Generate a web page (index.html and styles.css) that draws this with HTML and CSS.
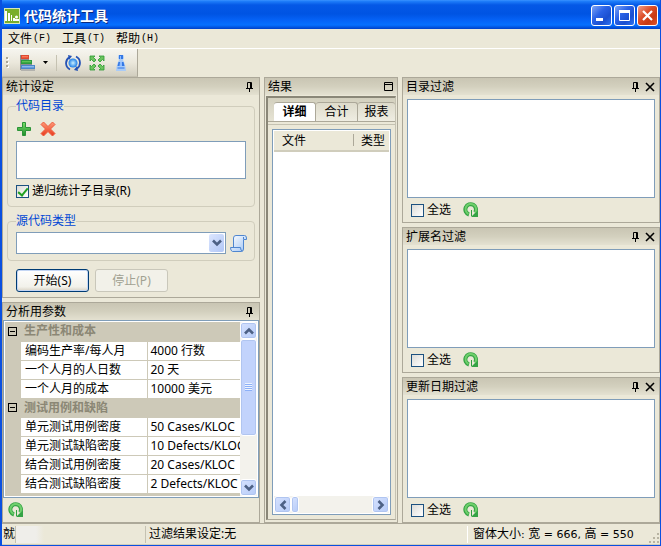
FILE: index.html
```html
<!DOCTYPE html>
<html lang="zh-CN">
<head>
<meta charset="utf-8">
<title>代码统计工具</title>
<link rel="stylesheet" href="styles.css">
</head>
<body>
<svg class="defs" aria-hidden="true">
  <defs>
    <linearGradient id="g-green" x1="0" y1="0" x2="0" y2="1"><stop offset="0" stop-color="#7be06a"/><stop offset="1" stop-color="#1f8d2b"/></linearGradient>
    <linearGradient id="g-red" x1="0" y1="0" x2="0" y2="1"><stop offset="0" stop-color="#ff9a78"/><stop offset="1" stop-color="#e8391c"/></linearGradient>
    <linearGradient id="g-blue" x1="0" y1="0" x2="0" y2="1"><stop offset="0" stop-color="#b5d6fb"/><stop offset="1" stop-color="#3e7fd0"/></linearGradient>
    <linearGradient id="g-paper" x1="0" y1="0" x2="1" y2="1"><stop offset="0" stop-color="#ffffff"/><stop offset="1" stop-color="#9fc4f4"/></linearGradient>
    <linearGradient id="g-pawn" x1="0" y1="0" x2="1" y2="0"><stop offset="0" stop-color="#2f74e0"/><stop offset=".5" stop-color="#9cc8ff"/><stop offset="1" stop-color="#2f74e0"/></linearGradient>
    <radialGradient id="g-globe"><stop offset="0" stop-color="#c9f0ff"/><stop offset="1" stop-color="#1d7ee8"/></radialGradient>
  </defs>
  <symbol id="pin" viewBox="0 0 7 10"><path d="M1.5 6V.5h4V6M4.5 1v5M0 6.5h7M3.5 7v3" fill="none" stroke="#000"/></symbol>
  <symbol id="close" viewBox="0 0 10 10"><path d="M1 1l8 8M9 1L1 9" fill="none" stroke="#000" stroke-width="1.6"/></symbol>
  <symbol id="refresh" viewBox="0 0 16 16"><path d="M6 12.500A5.300 5.300 0 1 1 12 10.500" fill="none" stroke="#35a345" stroke-width="4"/><path d="M15 8v7H8z" fill="#35a345"/><path d="M5.500 12A5.300 5.300 0 1 1 12 10.500" fill="none" stroke="#6fcf6c" stroke-width="2"/><path d="M8.500 8v6" stroke="#2f9f3d"/></symbol>
  <symbol id="chev" viewBox="0 0 10 8"><path d="M1 1.500l4 4 4-4" fill="none" stroke="#4d6185" stroke-width="2.600"/></symbol>
</svg>
<div class="window">
  <header class="titlebar">
    <svg class="logo" viewBox="0 0 16 16"><rect width="16" height="16" fill="#d7e6b8"/><rect x="1" y="1" width="14" height="14" fill="#79ae2a"/><path d="M1 3h2v10H1zM4 5h2v8H4zM7 7h1v6H7zM9 10h2v3H9zM11 11h4v2h-4z" fill="#fff"/><circle cx="12.500" cy="9" r="1.500" fill="#fff"/></svg>
    <h1>代码统计工具</h1>
    <button class="winbtn" aria-label="最小化"><svg viewBox="0 0 17 17"><path d="M3 11h7v3H3z" fill="#fff"/></svg></button>
    <button class="winbtn" aria-label="最大化"><svg viewBox="0 0 17 17"><path d="M3.500 4.500h10v9h-10z" fill="none" stroke="#fff"/><path d="M3 3h11v3H3z" fill="#fff"/></svg></button>
    <button class="winbtn winbtn-close" aria-label="关闭"><svg viewBox="0 0 17 17"><path d="M4 4l9 9M13 4l-9 9" stroke="#fff" stroke-width="2.200"/></svg></button>
  </header>
  <nav class="menu">
    <button>文件<span>(F)</span></button>
    <button>工具<span>(T)</span></button>
    <button>帮助<span>(H)</span></button>
  </nav>
  <div class="toolrow">
    <div class="toolbar">
      <svg class="grip" viewBox="0 0 3 12"><path d="M1 1h2v2H1zM1 5h2v2H1zM1 9h2v2H1z" fill="#fff"/><path d="M0 0h2v2H0zM0 4h2v2H0zM0 8h2v2H0z" fill="#aaa696"/></svg>
      <button class="tool tool-chart" aria-label="图表">
        <svg viewBox="0 0 16 16" width="16" height="16"><path d="M.5 0v15" stroke="#8d8d8d"/><rect x="1.500" y=".5" width="7" height="3" fill="url(#g-red)" stroke="#dd4a33"/><rect x="1.500" y="5.500" width="10" height="3" fill="url(#g-green)" stroke="#2b9a3f"/><rect x="1.500" y="10.500" width="13" height="3" fill="url(#g-blue)" stroke="#4b86c8"/><path d="M1 4.500h8M1 9.500h11M1 15h14" stroke="#8a8c90"/></svg>
        <svg viewBox="0 0 5 3" width="5" height="3"><path d="M0 0h5L2.500 3z"/></svg>
      </button>
      <span class="toolsep"></span>
      <button class="tool" aria-label="刷新"><svg viewBox="0 0 16 16" width="16" height="16"><circle cx="8" cy="8" r="4.500" fill="url(#g-globe)"/><path d="M5 14.500A7 7 0 0 1 4 2.500M11 1.500a7 7 0 0 1 1 12" fill="none" stroke="#2452b5" stroke-width="1.800"/><path d="M3 0l4 1-3 4zM13 16l-4-1 3-4z" fill="#2452b5"/></svg></button>
      <button class="tool" aria-label="全屏"><svg viewBox="0 0 16 16" width="16" height="16"><path d="M1 1h5L4.500 2.500l2.500 2.500-2 2-2.500-2.500L1 6zM15 1v5l-1.500-1.500L11 7 9 5l2.500-2.500L10 1zM1 15v-5l1.500 1.500L5 9l2 2-2.500 2.500L6 15zM15 15h-5l1.500-1.500L9 11l2-2 2.500 2.500L15 10z" fill="#6cc45e" stroke="#2b9a32" stroke-width=".8"/></svg></button>
      <button class="tool" aria-label="查找"><svg viewBox="0 0 16 16" width="16" height="16"><path d="M5.500 0h5l.5 3-1 2 1 2 1.500 5 .5 4H3l.5-4L5 7l1-2-1-2z" fill="#a9cbf8"/><path d="M6 0h4v4H6zM5.500 7h5l1 4h-7z" fill="#3478e4"/><path d="M4.500 12h7v2h-7z" fill="#6ba0f0"/><path d="M7 1h1v3H7zM7 7h2v4H6.500z" fill="#8fbcff"/></svg></button>
    </div>
  </div>

  <main class="workspace">
    <div class="column">
      <section class="panel">
        <header class="panel-head"><h2>统计设定</h2><button aria-label="固定"><svg class="pin"><use href="#pin"/></svg></button></header>
        <div class="settings">
          <fieldset>
            <legend>代码目录</legend>
            <div class="iconrow">
              <button aria-label="添加"><svg viewBox="0 0 16 16"><path d="M6.500 1.500h3v5h5v3h-5v5h-3v-5h-5v-3h5z" fill="url(#g-green)" stroke="#2c9438"/></svg></button>
              <button aria-label="删除"><svg viewBox="0 0 16 16"><path d="M3.500 1L8 5.500 12.500 1 15 3.500 10.500 8l4.500 4.500-2.500 2.500L8 10.500 3.500 15 1 12.500 5.500 8 1 3.500z" fill="url(#g-red)" stroke="#ee5b3d"/></svg></button>
            </div>
            <textarea aria-label="代码目录"></textarea>
            <label class="check"><input type="checkbox" checked>递归统计子目录(R)</label>
          </fieldset>
          <fieldset class="types">
            <legend>源代码类型</legend>
            <div class="typerow">
              <div class="combo"><select aria-label="源代码类型"><option></option></select><span class="combo-arrow"><svg class="chev"><use href="#chev"/></svg></span></div>
              <button aria-label="脚本"><svg class="script" viewBox="0 0 17 17"><path d="M3.500 12V3q0-2.500 2.500-2.500h8.500Q16.500.5 16.500 3v1.500h-3V14q0 2.500-2.500 2.500H2.500Q.5 16 .5 12.500h10q0 3.500 2 3.500" fill="url(#g-paper)" stroke="#4f86cf"/><path d="M13.500 4V2" stroke="#4f86cf"/></svg></button>
            </div>
          </fieldset>
          <div class="actions"><button class="btn">开始(S)</button><button class="btn" disabled>停止(P)</button></div>
        </div>
      </section>

      <section class="panel">
        <header class="panel-head"><h2>分析用参数</h2><button aria-label="固定"><svg class="pin"><use href="#pin"/></svg></button></header>
        <div class="props">
          <table>
            <colgroup><col class="c-gutter"><col class="c-name"><col></colgroup>
            <tbody>
              <tr class="cat"><td><span class="minus"></span></td><th colspan="2">生产性和成本</th></tr>
              <tr><td></td><th>编码生产率/每人月</th><td>4000 行数</td></tr>
              <tr><td></td><th>一个人月的人日数</th><td>20 天</td></tr>
              <tr><td></td><th>一个人月的成本</th><td>10000 美元</td></tr>
              <tr class="cat"><td><span class="minus"></span></td><th colspan="2">测试用例和缺陷</th></tr>
              <tr><td></td><th>单元测试用例密度</th><td>50 Cases/KLOC</td></tr>
              <tr><td></td><th>单元测试缺陷密度</th><td>10 Defects/KLOC</td></tr>
              <tr><td></td><th>结合测试用例密度</th><td>20 Cases/KLOC</td></tr>
              <tr><td></td><th>结合测试缺陷密度</th><td>2 Defects/KLOC</td></tr>
            </tbody>
          </table>
          <div class="vscroll">
            <button aria-label="向上"><svg class="chev up"><use href="#chev"/></svg></button>
            <div class="vtrack"><div class="vthumb"><i></i></div></div>
            <button aria-label="向下"><svg class="chev"><use href="#chev"/></svg></button>
          </div>
        </div>
        <footer class="props-foot"><button aria-label="刷新"><svg class="refresh"><use href="#refresh"/></svg></button></footer>
      </section>
    </div>

    <section class="panel results">
      <header class="panel-head"><h2>结果</h2><button aria-label="最大化"><svg class="max" viewBox="0 0 9 9"><path d="M.5.5h8v8h-8zM0 2.500h9" fill="none" stroke="#000"/></svg></button></header>
      <div class="sunken">
        <div class="tabs" role="tablist"><button role="tab" aria-selected="true">详细</button><button role="tab">合计</button><button role="tab">报表</button></div>
        <div class="tabpage">
          <div class="list">
            <table><thead><tr><th>文件</th><th>类型</th></tr></thead></table>
            <div class="hscroll">
              <button aria-label="向左"><svg class="chev left"><use href="#chev"/></svg></button>
              <div class="htrack"><div class="hthumb"></div></div>
              <button aria-label="向右"><svg class="chev right"><use href="#chev"/></svg></button>
            </div>
          </div>
        </div>
      </div>
    </section>

    <div class="column filters">
      <section class="panel">
        <header class="panel-head"><h2>目录过滤</h2><button aria-label="固定"><svg class="pin"><use href="#pin"/></svg></button><button aria-label="关闭"><svg class="close"><use href="#close"/></svg></button></header>
        <div class="filterbox"></div>
        <footer><label class="check"><input type="checkbox">全选</label><button aria-label="刷新"><svg class="refresh"><use href="#refresh"/></svg></button></footer>
      </section>
      <section class="panel">
        <header class="panel-head"><h2>扩展名过滤</h2><button aria-label="固定"><svg class="pin"><use href="#pin"/></svg></button><button aria-label="关闭"><svg class="close"><use href="#close"/></svg></button></header>
        <div class="filterbox"></div>
        <footer><label class="check"><input type="checkbox">全选</label><button aria-label="刷新"><svg class="refresh"><use href="#refresh"/></svg></button></footer>
      </section>
      <section class="panel">
        <header class="panel-head"><h2>更新日期过滤</h2><button aria-label="固定"><svg class="pin"><use href="#pin"/></svg></button><button aria-label="关闭"><svg class="close"><use href="#close"/></svg></button></header>
        <div class="filterbox"></div>
        <footer><label class="check"><input type="checkbox">全选</label><button aria-label="刷新"><svg class="refresh"><use href="#refresh"/></svg></button></footer>
      </section>
    </div>
  </main>

  <footer class="status">
    <span class="s-ready">就</span>
    <span class="s-blank"></span>
    <span class="s-filter">过滤结果设定:无</span>
    <span class="s-size">窗体大小<b>: </b>宽<b> = 666, </b>高<b> = 550</b></span>
    <svg class="sizer" viewBox="0 0 12 12"><path d="M9 1h2v2H9zM5 5h2v2H5zM9 5h2v2H9zM1 9h2v2H1zM5 9h2v2H5zM9 9h2v2H9z" fill="#b8b4a2"/></svg>
  </footer>
</div>
</body>
</html>
```
FILE: styles.css
```css
* { box-sizing: border-box; }

body {
  margin: 0;
  font: 12px/16px "Noto Sans", "Noto Sans CJK SC", sans-serif;
  color: #000;
}

h1, h2 { margin: 0; font-size: 12px; font-weight: 400; }

button {
  display: inline-flex;
  align-items: center;
  justify-content: center;
  padding: 0;
  border: 0;
  background: none;
  color: inherit;
  font: inherit;
}

svg { display: block; }

.defs { position: absolute; width: 0; height: 0; }

.window {
  display: flex;
  flex-direction: column;
  min-height: 100vh;
  border: solid #0a50e0;
  border-width: 0 1px 1px 2px;
  background: #ebe8d8;
}

/* Title bar */
.titlebar {
  display: flex;
  align-items: center;
  gap: 2px;
  height: 29px;
  padding: 2px 2px 0;
  background: linear-gradient(#3f95ff 0, #2080fb 1px, #0458e6 5px, #0054e3 14px, #0562f6 20px, #0670ff 25px, #0040c8 29px);
  color: #fff;
}

.titlebar h1 {
  flex: 1;
  padding-left: 2px;
  font-size: 14px;
  font-weight: 700;
  text-shadow: 1px 1px #0a2a80;
}

.logo { width: 16px; height: 16px; }

.winbtn {
  width: 21px;
  height: 21px;
  border: 1px solid #fff;
  border-radius: 3px;
  background: linear-gradient(135deg, #7ea4f6, #2a62e6 40%, #1a4fd0 70%, #2f74f2);
}

.winbtn svg { width: 17px; height: 17px; }
.winbtn-close { background: linear-gradient(135deg, #f0a08a, #dd4f2a 40%, #c83a12 70%, #e0552c); }

/* Menu and toolbar */
.menu {
  display: flex;
  gap: 11px;
  height: 20px;
  padding: 0 6px;
  border-bottom: 1px solid #fff;
}

.menu span { font: 10px/16px "Liberation Mono", monospace; padding-left: 1px; }

.toolrow { display: flex; height: 28px; }

.toolbar {
  display: flex;
  align-items: center;
  gap: 8px;
  padding: 0 8px 0 4px;
  border-right: 1px solid #aca899;
  border-bottom: 1px solid #c4c0b0;
  background: linear-gradient(#f6f5ef, #ebe8dc 50%, #d2cebf);
}

.grip { width: 3px; height: 12px; }
.tool-chart { gap: 7px; margin-left: 3px; }
.toolsep { width: 1px; height: 16px; background: #c5c2b2; }

/* Panels */
.workspace {
  display: grid;
  grid-template-columns: 258px minmax(0, 1fr) 258px;
  gap: 4px;
  flex: 1;
}

.column { display: flex; flex-direction: column; gap: 4px; }

.panel {
  display: flex;
  flex: 1;
  flex-direction: column;
  min-width: 0;
  border: 1px solid #aca899;
}

.panel-head {
  display: flex;
  align-items: center;
  gap: 6px;
  height: 17px;
  padding: 0 4px 0 3px;
  background: linear-gradient(#c9c5b3, #d3d0be 50%, #e4e1d1);
}

.panel-head h2 { flex: 1; }
.pin { width: 7px; height: 10px; }
.close { width: 10px; height: 10px; }
.max { width: 9px; height: 9px; }
.refresh { width: 16px; height: 16px; }
.column:first-child .panel-head { padding-right: 6px; }

/* Settings */
.settings { padding: 3px 4px 5px; }

fieldset {
  min-width: 0;
  margin: 0 0 6px;
  padding: 7px 8px;
  border: 1px solid #d0cdbc;
  border-radius: 4px;
}

legend { padding: 0; color: #0046d5; }

.iconrow { display: flex; gap: 8px; margin-bottom: 4px; }
.iconrow button, .iconrow svg { width: 16px; height: 16px; }

textarea {
  display: block;
  width: 100%;
  height: 38px;
  margin-bottom: 4px;
  border: 1px solid #7f9db9;
  background: #fff;
  resize: none;
}

.check { display: flex; align-items: center; gap: 3px; height: 16px; }

.check input {
  width: 13px;
  height: 13px;
  margin: 0;
  appearance: none;
  border: 1px solid #1c5180;
  background: linear-gradient(135deg, #dcdcd7, #fff);
}

.check input:checked::after {
  content: "";
  display: block;
  width: 4px;
  height: 8px;
  margin: 0 auto;
  border: solid #21a121;
  border-width: 0 2px 2px 0;
  transform: rotate(40deg);
}

.types { padding: 3px 7px 6px 8px; }
.typerow { display: flex; gap: 4px; }
.script { width: 17px; height: 17px; }
.combo { position: relative; flex: 1; }

select {
  display: block;
  width: 100%;
  height: 22px;
  appearance: none;
  border: 1px solid #7f9db9;
  border-radius: 0;
  background: #fff;
}

.combo-arrow {
  position: absolute;
  top: 2px;
  right: 2px;
  bottom: 2px;
  display: grid;
  place-items: center;
  width: 15px;
  border-radius: 2px;
  background: linear-gradient(135deg, #dce6fe, #b0c6f6);
  pointer-events: none;
}

.chev { width: 10px; height: 8px; }
.up { transform: rotate(180deg); }
.left { transform: rotate(90deg); }
.right { transform: rotate(-90deg); }

.actions { display: flex; gap: 6px; padding: 2px 9px 0; }

.btn {
  width: 73px;
  height: 23px;
  border: 1px solid #003c74;
  border-radius: 3px;
  background: linear-gradient(#fff, #f2f1ea 80%, #d8d2c4);
  box-shadow: inset 0 0 0 1px #c4d6f4;
}

.btn:disabled {
  border-color: #c9c7ba;
  background: #f2f1e9;
  box-shadow: none;
  color: #a1a192;
}

/* Property grid */
.props {
  display: flex;
  flex: 1;
  border: 1px solid #7f9db9;
  padding: 1px;
  background: #cdc9b8;
  box-shadow: inset 0 0 0 1px #fff;
}

.props table {
  flex: 1;
  align-self: flex-start;
  width: 0;
  border-collapse: collapse;
  table-layout: fixed;
}

.c-gutter { width: 16px; }
.c-name { width: 126px; }

.props tr { height: 19px; }

.props td, .props th {
  padding: 0 0 0 4px;
  overflow: hidden;
  border-bottom: 1px solid #cdc9b8;
  background: #fff;
  font-weight: 400;
  line-height: 18px;
  text-align: left;
  white-space: nowrap;
}

.props td:last-child { border-left: 1px solid #cdc9b8; padding-left: 3px; }

.props td:first-child { background: #cdc9b8; border-left: 0; padding: 0 0 0 3px; }
.props .cat th { background: #cdc9b8; color: #8b8775; font-weight: 700; padding-left: 3px; }

.minus {
  display: block;
  width: 9px;
  height: 9px;
  border: 1px solid #000;
  background: linear-gradient(#000, #000) center / 5px 1px no-repeat;
}

.vscroll { display: flex; flex-direction: column; width: 17px; background: #f3f2ec; }

.vscroll button, .hscroll button, .vthumb, .hthumb {
  border: 1px solid #fff;
  border-radius: 3px;
  background: linear-gradient(135deg, #d6e2fe, #b6cbf8);
  box-shadow: inset 0 0 0 1px #b0c5f0;
}

.vscroll button { height: 17px; }
.vtrack { flex: 1; }

.vthumb { display: grid; place-items: center; height: 69%; background: #c2d3fc; }
.vthumb i { width: 7px; height: 8px; background: repeating-linear-gradient(#eef4fe 0 1px, #8cb0f8 1px 2px); }
.props-foot { display: flex; align-items: center; height: 24px; padding: 0 5px; }

/* Results */
.sunken {
  display: flex;
  flex: 1;
  flex-direction: column;
  margin: 1px 1px 2px;
  border: 2px solid #8a8778;
  border-right: 1px solid #c5c2b2;
  border-bottom: 1px solid #aca899;
}

.tabs {
  display: flex;
  height: 24px;
  padding: 4px 0 0 6px;
  overflow: hidden;
  border-bottom: 1px solid #aca899;
  background: linear-gradient(#d3d0be, #e6e3d4);
}

.tabs button {
  flex: 0 0 42px;
  border: 1px solid #aca899;
  border-width: 1px 1px 0 0;
  border-radius: 3px 3px 0 0;
  background: linear-gradient(#dedbcb, #efede2);
}

.tabs button:last-child { flex: 1; border-right: 0; }
.tabs [aria-selected="true"] { background: #fff; font-weight: 700; }

.tabpage { display: flex; flex: 1; margin-top: 2px; padding: 4px; border-top: 1px solid #c5c2b2; }

.list {
  display: flex;
  flex: 1;
  flex-direction: column;
  justify-content: space-between;
  min-width: 0;
  padding: 1px;
  border: 1px solid #7f9db9;
  background: #fff;
}

.list table { width: 100%; border-collapse: collapse; table-layout: fixed; }

.list th {
  height: 20px;
  padding: 0 0 0 8px;
  border-bottom: 2px solid #d0cdbc;
  background: #ebe8d8;
  font-weight: 400;
  text-align: left;
  white-space: nowrap;
}

.list th:last-child {
  width: 36px;
  background: linear-gradient(#aca899, #aca899) 0 3px / 1px 12px no-repeat #ebe8d8;
}

.hscroll { display: flex; height: 17px; background: #f3f2ec; }
.hscroll button { width: 17px; }
.htrack { flex: 1; }
.hthumb { width: 8px; height: 17px; }

/* Filters */
.filterbox { flex: 1; margin: 4px 4px 0; border: 1px solid #7f9db9; background: #fff; }
.filters footer { display: flex; align-items: center; gap: 12px; height: 24px; padding: 0 8px; }

/* Status bar */
.status {
  display: flex;
  align-items: center;
  height: 22px;
  border-top: 1px solid #aca899;
  border-bottom: 1px solid #d0cdbc;
  white-space: nowrap;
}

.status span { height: 17px; }
.s-ready { padding-left: 1px; border-right: 1px solid #c5c2b2; }
.s-blank { width: 129px; background: linear-gradient(90deg, #efeeea 20px, #ebe8d8 28px); }
.s-filter { flex: 1; padding-left: 3px; border-left: 1px solid #c5c2b2; }
.s-size { width: 181px; padding-left: 5px; border-left: 1px solid #fff; }
.s-size b { font: 11px/16px "DejaVu Sans", sans-serif; }
.sizer { width: 12px; height: 12px; align-self: flex-end; }
```
